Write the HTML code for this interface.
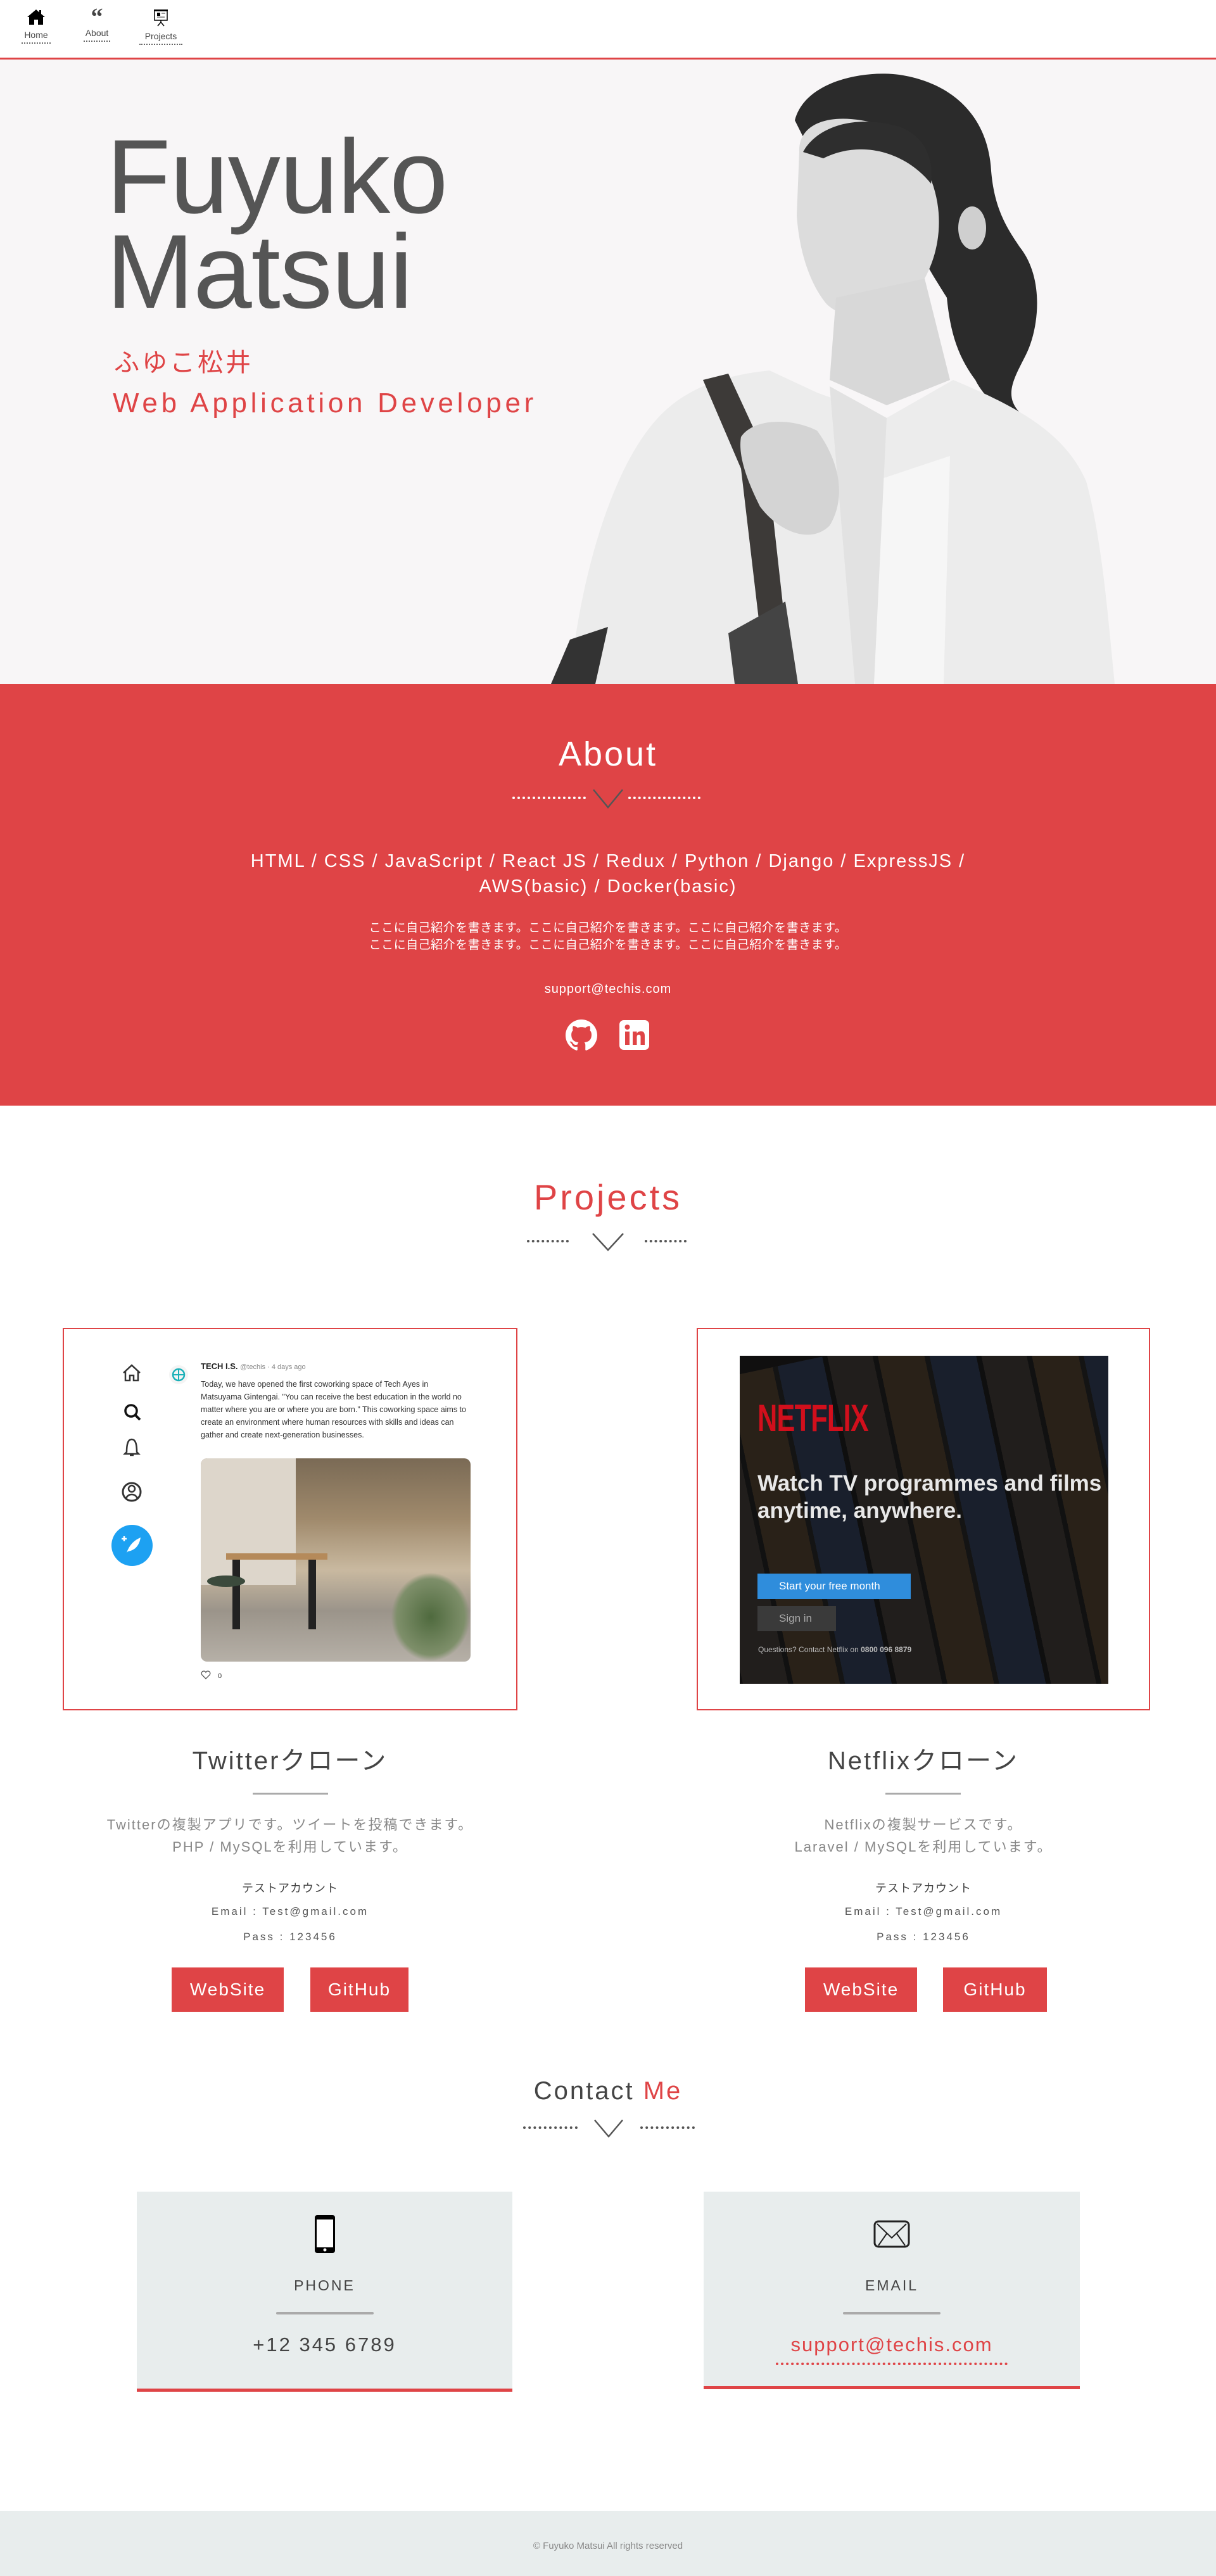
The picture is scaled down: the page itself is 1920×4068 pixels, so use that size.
<!DOCTYPE html>
<html><head><meta charset="utf-8">
<style>
*{margin:0;padding:0;box-sizing:border-box}
body{width:1920px;height:4068px;position:relative;background:#fff;font-family:"Liberation Sans","Noto Sans CJK JP",sans-serif;overflow:hidden}
.a{position:absolute}
.c{position:absolute;left:0;width:100%;text-align:center}
.nav{left:0;top:0;width:1920px;background:#fff;border-bottom:3px solid #df4446;height:94px}
.ni{position:absolute;top:14px;text-align:center;font-size:14px;color:#444}
.ni span{display:block;margin-top:4px;padding-bottom:4px;border-bottom:2px dotted #666}
.dots{position:absolute;height:0;border-top:4px dotted #fff}
.btn{position:absolute;background:#df4446;color:#fff;font-size:28px;letter-spacing:2px;text-align:center}
.pt{font-size:40px;color:#444;letter-spacing:3px}
.pd{font-size:22px;color:#888;letter-spacing:2px;line-height:35px}
.acc{font-size:18px;color:#444;letter-spacing:1px}
.cred{font-size:17px;color:#555;letter-spacing:3px}
</style></head><body>

<div class="a nav">
  <div class="ni" style="left:34px;width:46px">
    <svg width="30" height="26" viewBox="0 0 30 26"><path d="M15 1 L1 13 L4 13 L4 25 L12 25 L12 17 L18 17 L18 25 L26 25 L26 13 L29 13 L23 8 L23 2 L20 2 L20 5.5 Z" fill="#000"/></svg>
    <span>Home</span></div>
  <div class="ni" style="left:132px;width:42px">
    <div style="font-size:38px;font-weight:bold;line-height:26px;height:26px;font-family:'Liberation Serif',serif">&#8220;</div>
    <span>About</span></div>
  <div class="ni" style="left:220px;width:68px">
    <svg width="26" height="28" viewBox="0 0 26 28"><rect x="2" y="1" width="22" height="2" fill="#000"/><rect x="3" y="3" width="20" height="15" fill="none" stroke="#000" stroke-width="1.5"/><rect x="7" y="6" width="5" height="5" fill="#000"/><rect x="14" y="6" width="6" height="2" fill="#999"/><rect x="7" y="12" width="12" height="2" fill="#999"/><path d="M13 18 L13 21 M13 21 L8 27 M13 21 L18 27" stroke="#000" stroke-width="1.5"/></svg>
    <span>Projects</span></div>
</div>

<!-- hero -->
<div class="a" style="left:0;top:94px;width:1920px;height:986px;background:#f8f6f7"></div>
<div class="a" style="left:168px;top:205px;font-size:166px;line-height:150px;color:#555;letter-spacing:-1px">Fuyuko<br>Matsui</div>
<div class="a" style="left:180px;top:540px;font-size:40px;color:#df4446;letter-spacing:4px">ふゆこ松井</div>
<div class="a" style="left:178px;top:612px;font-size:44px;color:#df4446;letter-spacing:5.7px">Web Application Developer</div>

<svg class="a" style="left:860px;top:94px" width="960" height="986" viewBox="860 94 960 986">
  <path d="M1255 190 C1270 130 1360 110 1420 118 C1500 130 1560 180 1565 270 C1570 330 1590 360 1610 390 C1650 440 1640 520 1620 560 C1600 600 1580 630 1620 660 C1600 660 1560 640 1540 600 C1510 560 1500 520 1495 470 C1470 430 1450 400 1440 360 L1290 260 Z" fill="#2b2b2b"/>
  <path d="M1262 240 C1260 200 1300 180 1360 190 C1430 200 1470 260 1480 320 C1490 380 1470 440 1430 480 C1390 510 1330 505 1305 480 C1280 450 1262 400 1258 340 Z" fill="#dcdcdc"/>
  <path d="M1268 240 C1290 200 1350 180 1420 200 C1460 215 1475 250 1470 290 C1430 240 1360 220 1300 250 Z" fill="#2e2e2e"/>
  <ellipse cx="1535" cy="360" rx="22" ry="34" fill="#cfcfcf"/>
  <path d="M1320 470 L1460 440 L1500 600 L1400 640 L1310 600 Z" fill="#d8d8d8"/>
  <path d="M900 1080 C910 950 960 720 1060 640 C1110 600 1170 590 1215 585 L1290 620 L1400 660 L1505 600 C1600 640 1680 680 1715 760 C1740 850 1750 980 1760 1080 Z" fill="#ececec"/>
  <path d="M1380 760 L1500 720 L1490 1080 L1380 1080 Z" fill="#f6f6f6"/>
  <path d="M1310 610 L1400 660 L1380 1080 L1350 1080 Z" fill="#e2e2e2"/>
  <path d="M1110 600 L1150 590 L1210 720 L1250 1080 L1210 1080 L1170 740 Z" fill="#3d3a38"/>
  <path d="M870 1080 L900 1010 L960 990 L940 1080 Z" fill="#333"/>
  <path d="M1150 1000 L1240 950 L1260 1080 L1160 1080 Z" fill="#444"/>
  <path d="M1170 690 C1190 660 1250 660 1290 680 C1320 720 1340 780 1310 830 C1280 860 1230 840 1200 800 C1180 760 1165 720 1170 690 Z" fill="#d4d4d4"/>
</svg>

<!-- about -->
<div class="a" style="left:0;top:1080px;width:1920px;height:666px;background:#df4446"></div>
<div class="c" style="top:1160px;font-size:54px;color:#fff;letter-spacing:3px">About</div>
<div class="dots" style="left:809px;top:1258px;width:116px"></div>
<svg class="a" style="left:935px;top:1245px" width="50" height="32"><path d="M2 2 L25 30 L48 2" fill="none" stroke="#555" stroke-width="2.5"/></svg>
<div class="dots" style="left:992px;top:1258px;width:114px"></div>
<div class="c" style="top:1340px;font-size:29px;line-height:40px;color:#fff;letter-spacing:2px">HTML / CSS / JavaScript / React JS / Redux / Python / Django / ExpressJS /<br>AWS(basic) / Docker(basic)</div>
<div class="c" style="top:1452px;font-size:19px;line-height:27px;color:#fff;letter-spacing:0.5px">ここに自己紹介を書きます。ここに自己紹介を書きます。ここに自己紹介を書きます。<br>ここに自己紹介を書きます。ここに自己紹介を書きます。ここに自己紹介を書きます。</div>
<div class="c" style="top:1551px;font-size:20px;color:#fff;letter-spacing:1px">support@techis.com</div>
<svg class="a" style="left:893px;top:1610px" width="50" height="50" viewBox="0 0 16 16"><path fill="#fff" d="M8 0C3.580 0 0 3.58 0 8c0 3.54 2.29 6.53 5.47 7.59.4.07.55-.17.55-.38 0-.19-.01-.82-.01-1.49-2.01.37-2.530-.49-2.69-.94-.09-.23-.48-.94-.82-1.13-.28-.15-.68-.52-.01-.53.63-.01 1.08.58 1.23.82.72 1.21 1.87.87 2.33.66.07-.52.28-.87.51-1.07-1.78-.2-3.64-.89-3.64-3.95 0-.87.31-1.59.82-2.15-.08-.2-.36-1.02.08-2.12 0 0 .67-.21 2.2.82.64-.18 1.32-.27 2-.27.68 0 1.36.09 2 .27 1.53-1.04 2.2-.82 2.2-.82.44 1.1.16 1.92.08 2.12.51.56.82 1.27.82 2.15 0 3.07-1.87 3.75-3.65 3.95.29.25.54.73.54 1.48 0 1.07-.01 1.93-.01 2.2 0 .21.15.46.55.38A8.013 8.013 0 0016 8c0-4.42-3.58-8-8-8z"/></svg>
<svg class="a" style="left:978px;top:1611px" width="47" height="47" viewBox="0 0 47 47"><rect width="47" height="47" rx="7" fill="#fff"/><rect x="9" y="18" width="7" height="21" fill="#df4446"/><circle cx="12.5" cy="11" r="4" fill="#df4446"/><path d="M21 18 H27.5 V21 C29 18.5 31.5 17.5 34 17.5 C38.5 17.5 40 20.5 40 25 V39 H33.5 V26.5 C33.5 24 32.5 23 30.5 23 C28.5 23 27.5 24.5 27.5 27 V39 H21 Z" fill="#df4446"/></svg>

<!-- projects -->
<div class="c" style="top:1858px;font-size:56px;color:#df4446;letter-spacing:4px">Projects</div>
<div class="dots" style="left:832px;top:1958px;width:66px;border-top-color:#555"></div>
<svg class="a" style="left:934px;top:1946px" width="52" height="30"><path d="M2 2 L26 28 L50 2" fill="none" stroke="#555" stroke-width="2.5"/></svg>
<div class="dots" style="left:1018px;top:1958px;width:66px;border-top-color:#555"></div>

<!-- twitter card -->
<div class="a" style="left:99px;top:2097px;width:718px;height:604px;border:2px solid #df4446"></div>
<svg class="a" style="left:190px;top:2148px" width="40" height="330" viewBox="0 0 40 330">
  <path d="M5 20 L18 8 L31 20 M8 17 V32 H15 V24 H21 V32 H28 V17" fill="none" stroke="#333" stroke-width="2.5"/>
  <circle cx="17" cy="80" r="9" fill="none" stroke="#111" stroke-width="3.5"/><path d="M24 87 L31 94" stroke="#111" stroke-width="4"/>
  <path d="M10 145 C10 130 13 125 18 125 C23 125 26 130 26 145 L29 148 H7 Z M15 150 H21" fill="none" stroke="#333" stroke-width="2.5"/>
  <circle cx="18" cy="208" r="14" fill="none" stroke="#333" stroke-width="3"/><circle cx="18" cy="203" r="5" fill="none" stroke="#333" stroke-width="2.5"/><path d="M9 218 C13 210 23 210 27 218" fill="none" stroke="#333" stroke-width="2.5"/>
</svg>
<div class="a" style="left:176px;top:2408px;width:65px;height:65px;border-radius:50%;background:#1da1f2"></div>
<svg class="a" style="left:190px;top:2422px" width="36" height="36"><path d="M10 30 C14 18 22 10 32 6 C30 18 24 26 12 28 Z" fill="#fff"/><path d="M6 4 V12 M2 8 H10" stroke="#fff" stroke-width="2.5"/></svg>
<svg class="a" style="left:266px;top:2155px" width="32" height="32"><circle cx="16" cy="16" r="15" fill="#f4f4f4"/><circle cx="16" cy="16" r="9" fill="none" stroke="#1ab0b8" stroke-width="2.5"/><path d="M7 16 H25 M16 7 V25" stroke="#1ab0b8" stroke-width="2"/></svg>
<div class="a" style="left:317px;top:2150px;font-size:13px;color:#222"><b>TECH I.S.</b> <span style="color:#888;font-size:11px">@techis · 4 days ago</span></div>
<div class="a" style="left:317px;top:2176px;width:420px;font-size:12.5px;line-height:20px;color:#333">Today, we have opened the first coworking space of Tech Ayes in Matsuyama Gintengai. "You can receive the best education in the world no matter where you are or where you are born." This coworking space aims to create an environment where human resources with skills and ideas can gather and create next-generation businesses.</div>
<div class="a" style="left:317px;top:2303px;width:426px;height:321px;border-radius:10px;overflow:hidden;background:linear-gradient(180deg,#7a6a55 0%,#a08a6c 30%,#c9b9a0 55%,#9b948a 75%,#b6b0a7 100%)">
  <div class="a" style="left:0;top:0;width:150px;height:200px;background:#ddd6cb"></div>
  <div class="a" style="left:40px;top:150px;width:160px;height:10px;background:#b58a5a"></div>
  <div class="a" style="left:50px;top:160px;width:12px;height:110px;background:#222"></div>
  <div class="a" style="left:170px;top:160px;width:12px;height:110px;background:#222"></div>
  <div class="a" style="left:10px;top:185px;width:60px;height:18px;border-radius:50%;background:#3b4a3c"></div>
  <div class="a" style="left:300px;top:180px;width:126px;height:141px;background:radial-gradient(#4f6a3e,#7e8f6a 60%,transparent 70%)"></div>
</div>
<svg class="a" style="left:317px;top:2637px" width="40" height="16"><path d="M8 14 L2 8 C0 5 2 2 5 2 C6.5 2 7.5 3 8 4 C8.5 3 9.5 2 11 2 C14 2 16 5 14 8 Z" fill="none" stroke="#555" stroke-width="1.3"/><text x="27" y="13" font-size="11" fill="#333" font-family="Liberation Sans">0</text></svg>

<div class="c pt" style="left:99px;width:718px;top:2748px">Twitterクローン</div>
<div class="a" style="left:399px;top:2831px;width:119px;height:3px;background:#aaa"></div>
<div class="c pd" style="left:99px;width:718px;top:2864px">Twitterの複製アプリです。ツイートを投稿できます。<br>PHP / MySQLを利用しています。</div>
<div class="c acc" style="left:99px;width:718px;top:2968px">テストアカウント</div>
<div class="c cred" style="left:99px;width:718px;top:3009px">Email : Test@gmail.com</div>
<div class="c cred" style="left:99px;width:718px;top:3049px">Pass : 123456</div>
<div class="btn" style="left:271px;top:3107px;width:177px;height:70px;line-height:70px">WebSite</div>
<div class="btn" style="left:490px;top:3107px;width:155px;height:70px;line-height:70px">GitHub</div>

<!-- netflix card -->
<div class="a" style="left:1100px;top:2097px;width:716px;height:604px;border:2px solid #df4446"></div>
<div class="a" style="left:1168px;top:2141px;width:582px;height:518px;overflow:hidden;background:#1a1818">
  <div class="a" style="left:-40px;top:-30px;width:700px;height:600px;transform:rotate(-12deg);background:repeating-linear-gradient(90deg,#3a3530 0 70px,#1c1c1c 70px 78px,#4a3a2a 78px 150px,#222 150px 158px,#2b3850 158px 230px,#181818 230px 238px),#333;opacity:.8"></div>
  <div class="a" style="left:0;top:0;width:582px;height:518px;background:rgba(0,0,0,.35)"></div>
  <div class="a" style="left:28px;top:64px;font-size:60px;font-weight:bold;color:#d10f1c;transform:scaleX(.72);transform-origin:left;letter-spacing:-1px">NETFLIX</div>
  <div class="a" style="left:28px;top:180px;width:620px;font-size:35px;font-weight:bold;line-height:43px;color:#e8e8e8;white-space:nowrap">Watch TV programmes and films<br>anytime, anywhere.</div>
  <div class="a" style="left:28px;top:344px;width:242px;height:40px;background:#2f8ddc;color:#fff;font-size:17px;line-height:40px;padding-left:34px">Start your free month</div>
  <div class="a" style="left:28px;top:395px;width:124px;height:40px;background:#3a3a3a;color:#aaa;font-size:17px;line-height:40px;padding-left:34px">Sign in</div>
  <div class="a" style="left:29px;top:457px;font-size:12px;color:#bbb">Questions? Contact Netflix on <b>0800 096 8879</b></div>
</div>

<div class="c pt" style="left:1100px;width:716px;top:2748px">Netflixクローン</div>
<div class="a" style="left:1398px;top:2831px;width:119px;height:3px;background:#aaa"></div>
<div class="c pd" style="left:1100px;width:716px;top:2864px">Netflixの複製サービスです。<br>Laravel / MySQLを利用しています。</div>
<div class="c acc" style="left:1100px;width:716px;top:2968px">テストアカウント</div>
<div class="c cred" style="left:1100px;width:716px;top:3009px">Email : Test@gmail.com</div>
<div class="c cred" style="left:1100px;width:716px;top:3049px">Pass : 123456</div>
<div class="btn" style="left:1271px;top:3107px;width:177px;height:70px;line-height:70px">WebSite</div>
<div class="btn" style="left:1489px;top:3107px;width:164px;height:70px;line-height:70px">GitHub</div>

<!-- contact -->
<div class="c" style="top:3280px;font-size:40px;color:#444;letter-spacing:3px">Contact <span style="color:#df4446">Me</span></div>
<div class="dots" style="left:826px;top:3358px;width:86px;border-top-color:#555"></div>
<svg class="a" style="left:937px;top:3346px" width="48" height="30"><path d="M2 2 L24 28 L46 2" fill="none" stroke="#555" stroke-width="2.5"/></svg>
<div class="dots" style="left:1011px;top:3358px;width:86px;border-top-color:#555"></div>

<div class="a" style="left:216px;top:3461px;width:593px;height:316px;background:#e8eded;border-bottom:5px solid #df4446"></div>
<svg class="a" style="left:495px;top:3497px" width="36" height="62" viewBox="0 0 36 62"><rect x="2" y="1" width="32" height="60" rx="4" fill="#000"/><rect x="5" y="8" width="26" height="44" fill="#fff"/><circle cx="18" cy="56" r="2.5" fill="#fff"/></svg>
<div class="c" style="left:216px;width:593px;top:3596px;font-size:23px;color:#444;letter-spacing:3px">PHONE</div>
<div class="a" style="left:436px;top:3651px;width:154px;height:4px;border-radius:2px;background:#aaa"></div>
<div class="c" style="left:216px;width:593px;top:3685px;font-size:31px;color:#444;letter-spacing:3px">+12 345 6789</div>

<div class="a" style="left:1111px;top:3461px;width:594px;height:312px;background:#e8eded;border-bottom:5px solid #df4446"></div>
<svg class="a" style="left:1379px;top:3506px" width="58" height="44" viewBox="0 0 58 44"><rect x="2" y="2" width="54" height="40" rx="6" fill="none" stroke="#222" stroke-width="3"/><path d="M6 6 L29 28 L52 6 M8 40 L22 20 M50 40 L36 20" fill="none" stroke="#222" stroke-width="2"/></svg>
<div class="c" style="left:1111px;width:594px;top:3596px;font-size:23px;color:#444;letter-spacing:3px">EMAIL</div>
<div class="a" style="left:1331px;top:3651px;width:154px;height:4px;border-radius:2px;background:#aaa"></div>
<div class="c" style="left:1111px;width:594px;top:3685px;font-size:31px;color:#df4446;letter-spacing:2px">support@techis.com</div>
<div class="dots" style="left:1225px;top:3731px;width:366px;border-top-color:#df4446"></div>

<div class="a" style="left:0;top:3965px;width:1920px;height:103px;background:#e8eded"></div>
<div class="c" style="top:4012px;font-size:15px;color:#888">© Fuyuko Matsui All rights reserved</div>
</body></html>
